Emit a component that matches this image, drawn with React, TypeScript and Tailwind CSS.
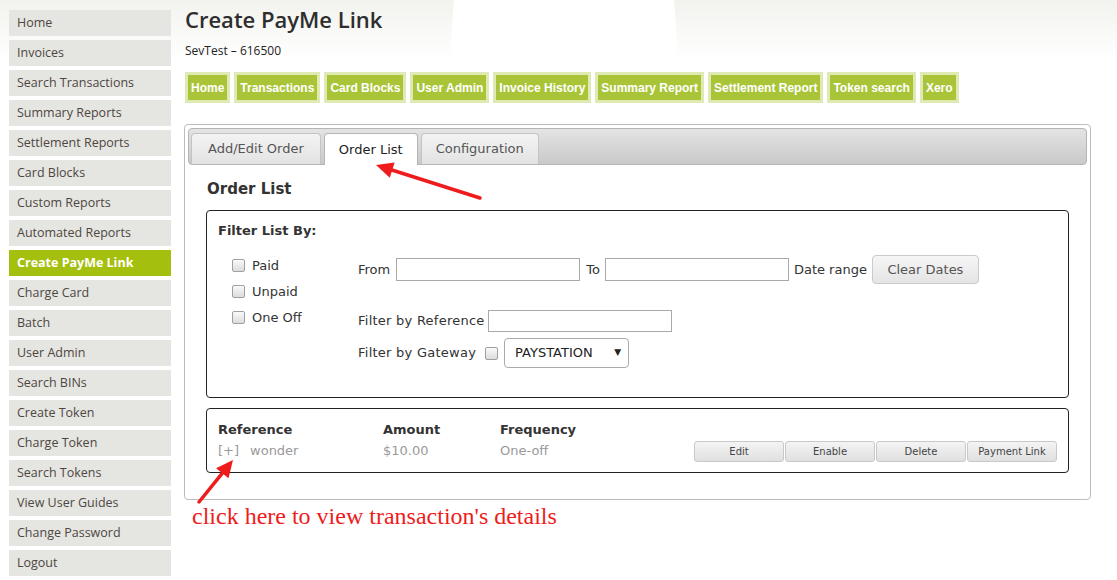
import React from "react"

const sideLinks = [
  "Home",
  "Invoices",
  "Search Transactions",
  "Summary Reports",
  "Settlement Reports",
  "Card Blocks",
  "Custom Reports",
  "Automated Reports",
  "Create PayMe Link",
  "Charge Card",
  "Batch",
  "User Admin",
  "Search BINs",
  "Create Token",
  "Charge Token",
  "Search Tokens",
  "View User Guides",
  "Change Password",
  "Logout",
]

const topLinks = [
  "Home",
  "Transactions",
  "Card Blocks",
  "User Admin",
  "Invoice History",
  "Summary Report",
  "Settlement Report",
  "Token search",
  "Xero",
]

const rowButtons = ["Edit", "Enable", "Delete", "Payment Link"]

function Arrow({ x1, y1, x2, y2 }: { x1: number; y1: number; x2: number; y2: number }) {
  const dx = x2 - x1
  const dy = y2 - y1
  const len = Math.sqrt(dx * dx + dy * dy)
  const ux = dx / len
  const uy = dy / len
  const headLen = 17
  const headW = 8
  const bx = x2 - ux * headLen
  const by = y2 - uy * headLen
  const pts = `${x2},${y2} ${bx - uy * headW},${by + ux * headW} ${bx + uy * headW},${by - ux * headW}`
  return (
    <g>
      <line x1={x1} y1={y1} x2={bx + ux * 2} y2={by + uy * 2} stroke="#ee1c1c" strokeWidth={3.5} strokeLinecap="round" />
      <polygon points={pts} fill="#ee1c1c" />
    </g>
  )
}

function Check() {
  return (
    <span className="inline-block w-[13px] h-[13px] rounded-[2px] border border-[#a0a0a0] bg-gradient-to-b from-[#fafafa] to-[#dcdcdc]" />
  )
}

const verdana = { fontFamily: '"DejaVu Sans", Verdana, sans-serif' }

export default function App() {
  return (
    <div
      className="relative w-[1117px] h-[580px] overflow-hidden bg-white text-[#333]"
      style={{ fontFamily: '"Open Sans", "DejaVu Sans", sans-serif' }}
    >
      {/* page background decoration */}
      <div className="pointer-events-none absolute inset-x-0 top-0 h-[60px] bg-gradient-to-b from-[#f2f2ee] to-white" />
      <div className="pointer-events-none absolute left-[449px] top-[-320px] w-[230px] h-[900px] rounded-[50%] bg-white" />

      <div className="relative flex">
        {/* sidebar */}
        <nav className="w-[171px] pl-[9px] pt-[10px] flex flex-col gap-[4px]">
          {sideLinks.map((l) =>
            l === "Create PayMe Link" ? (
              <div key={l} className="h-[26px] pl-[8px] flex items-center bg-[#a5bf0f] text-white font-bold text-[12.5px]">
                {l}
              </div>
            ) : (
              <div key={l} className="h-[26px] pl-[8px] flex items-center bg-[#e5e5e1] text-[#4e4741] text-[12.5px]">
                {l}
              </div>
            )
          )}
        </nav>

        {/* main */}
        <main className="flex-1 pl-[13px]">
          <h1 className="pl-[1px] mt-[4px] text-[22px] leading-[30px] text-[#2e2e2e] font-semibold">Create PayMe Link</h1>
          <div className="pl-[1px] mt-[9px] text-[12px] leading-[16px] text-[#222]">SevTest – 616500</div>

          <div className="flex gap-[4px] mt-[13px] pl-[1px]">
            {topLinks.map((l) => (
              <span
                key={l}
                className="h-[31px] px-[3px] flex items-center border-[3px] border-[#dfe9b4] bg-[#a9c537] text-white text-[12px] font-bold"
                style={{ fontFamily: '"Liberation Sans", Arial, sans-serif' }}
              >
                {l}
              </span>
            ))}
          </div>

          {/* panel */}
          <section className="mt-[21px] w-[907px] h-[376px] border border-[#bcbcbc] rounded-[4px] p-[3px]" style={verdana}>
            <div className="h-[37px] rounded-[4px] border border-[#b5b5b5] bg-gradient-to-b from-[#e4e4e4] to-[#c9c9c9] flex items-end gap-[3px] pl-[2px]">
              <div className="h-[31px] px-[16px] flex items-center rounded-t-[4px] border border-b-0 border-[#c4c4c4] bg-gradient-to-b from-[#f3f3f3] to-[#e3e3e3] text-[13px] text-[#555]">
                Add/Edit Order
              </div>
              <div className="h-[32px] mb-[-1px] px-[14px] flex items-center rounded-t-[4px] border border-b-0 border-[#b5b5b5] bg-white text-[13px] text-[#222]">
                Order List
              </div>
              <div className="h-[31px] px-[14px] flex items-center rounded-t-[4px] border border-b-0 border-[#c4c4c4] bg-gradient-to-b from-[#f3f3f3] to-[#e3e3e3] text-[13px] text-[#555]">
                Configuration
              </div>
            </div>

            <div className="px-[18px]">
              <h2 className="mt-[14px] pl-[1px] text-[15px] leading-[20px] font-bold text-[#333]">Order List</h2>

              {/* filter box */}
              <div className="mt-[11px] h-[188px] border border-[#222] rounded-[4px] pl-[11px] pt-[11px]">
                <div className="text-[13px] leading-[18px] font-bold text-[#333]">Filter List By:</div>
                <div className="flex mt-[21px]">
                  <div className="w-[140px] pl-[14px] flex flex-col gap-[9px] text-[13px] leading-[17px] -mt-[4px]">
                    <label className="flex items-center gap-[7px]">
                      <Check />
                      Paid
                    </label>
                    <label className="flex items-center gap-[7px]">
                      <Check />
                      Unpaid
                    </label>
                    <label className="flex items-center gap-[7px]">
                      <Check />
                      One Off
                    </label>
                  </div>

                  <div className="flex flex-col text-[13px] text-[#333]">
                    <div className="flex items-center h-[29px] -mt-[6px]">
                      <span>From</span>
                      <span className="ml-[6px] w-[184px] h-[23px] border border-[#a9a9a9] bg-white" />
                      <span className="ml-[6px]">To</span>
                      <span className="ml-[5px] w-[184px] h-[23px] border border-[#a9a9a9] bg-white" />
                      <span className="ml-[5px]">Date range</span>
                      <span className="ml-[5px] h-[29px] w-[107px] flex items-center justify-center rounded-[4px] border border-[#cacaca] bg-gradient-to-b from-[#f6f6f6] to-[#e4e4e4] text-[#555]">
                        Clear Dates
                      </span>
                    </div>
                    <div className="flex items-center h-[22px] mt-[26px]">
                      <span className="tracking-[0.25px]">Filter by Reference</span>
                      <span className="ml-[3px] w-[184px] h-[22px] border border-[#a9a9a9] bg-white" />
                    </div>
                    <div className="flex items-center h-[30px] mt-[6px]">
                      <span className="tracking-[0.25px]">Filter by Gateway</span>
                      <span className="ml-[9px] flex">
                        <Check />
                      </span>
                      <span className="ml-[6px] w-[125px] h-[30px] pl-[10px] pr-[7px] flex items-center justify-between rounded-[4px] border border-[#aaa] bg-white text-[#222]">
                        PAYSTATION
                        <span className="text-[9px]">▼</span>
                      </span>
                    </div>
                  </div>
                </div>
              </div>

              {/* order list */}
              <div className="mt-[10px] h-[65px] border border-[#222] rounded-[4px] pl-[11px] pr-[11px] pt-[12px] text-[13px]">
                <div className="flex leading-[17px] font-bold text-[#333]">
                  <span className="w-[165px]">Reference</span>
                  <span className="w-[117px]">Amount</span>
                  <span>Frequency</span>
                </div>
                <div className="flex items-center h-[21px] mt-[3px] text-[#999]">
                  <span className="w-[165px] mb-[2px]">
                    [+]<span className="ml-[11px]">wonder</span>
                  </span>
                  <span className="w-[117px] mb-[2px]">$10.00</span>
                  <span className="mb-[2px]">One-off</span>
                  <div className="ml-auto flex gap-[1px]">
                    {rowButtons.map((b) => (
                      <span
                        key={b}
                        className="w-[90px] h-[21px] flex items-center justify-center rounded-[3px] border border-[#c9c9c9] bg-gradient-to-b from-[#f4f4f4] to-[#e0e0e0] text-[10px] text-[#444]"
                      >
                        {b}
                      </span>
                    ))}
                  </div>
                </div>
              </div>
            </div>
          </section>

          <div
            className="mt-[2px] pl-[8px] text-[24px] leading-[28px] text-[#ee1c1c]"
            style={{ fontFamily: '"Liberation Serif", "Times New Roman", serif' }}
          >
            click here to view transaction's details
          </div>
        </main>
      </div>

      {/* annotation arrows */}
      <svg className="pointer-events-none absolute inset-0" width={1117} height={580}>
        <Arrow x1={480} y1={198} x2={376} y2={165} />
        <Arrow x1={199} y1={502} x2={233} y2={460} />
      </svg>
    </div>
  )
}
